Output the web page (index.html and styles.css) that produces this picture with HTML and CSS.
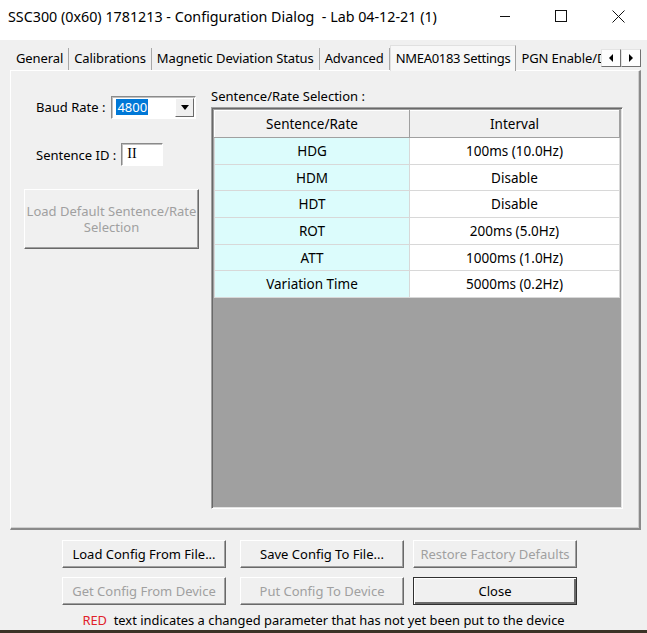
FILE: index.html
```html
<!DOCTYPE html>
<html>
<head>
<meta charset="utf-8">
<link rel="stylesheet" href="styles.css">
</head>
<body>
<div class="window">
  <div class="titlebar">
    <div class="title">SSC300 (0x60) 1781213 - Configuration Dialog&nbsp; - Lab 04-12-21 (1)</div>
    <div class="controls">
      <span class="ctl"><svg width="12" height="12" viewBox="0 0 12 12"><path d="M1 6.5h10" stroke="#111" stroke-width="1"/></svg></span>
      <span class="ctl"><svg width="12" height="12" viewBox="0 0 12 12"><rect x="0.5" y="0.5" width="11" height="11" fill="none" stroke="#111" stroke-width="1"/></svg></span>
      <span class="ctl"><svg width="13" height="13" viewBox="0 0 13 13"><path d="M0.5 0.5l12 12M12.5 0.5l-12 12" stroke="#111" stroke-width="1"/></svg></span>
    </div>
  </div>
  <div class="body">
    <div class="tabs">
      <div class="tab">General</div>
      <div class="tab">Calibrations</div>
      <div class="tab">Magnetic Deviation Status</div>
      <div class="tab">Advanced</div>
      <div class="tab active">NMEA0183 Settings</div>
      <div class="tab last">PGN Enable/Di</div>
      <div class="arrows">
        <span class="arr"><svg width="6" height="8" viewBox="0 0 6 8"><path d="M5 0v8L1 4z" fill="#000"/></svg></span>
        <span class="arr"><svg width="6" height="8" viewBox="0 0 6 8"><path d="M1 0v8l4-4z" fill="#000"/></svg></span>
      </div>
    </div>
    <div class="panel">
      <div class="left">
        <div class="field baud">
          <span class="lbl">Baud Rate :</span>
          <div class="combo"><span class="sel">4800</span><span class="drop"><svg width="8" height="5" viewBox="0 0 8 5"><path d="M0 0h8L4 5z" fill="#000"/></svg></span></div>
        </div>
        <div class="field sid">
          <span class="lbl">Sentence ID :</span>
          <div class="input">II</div>
        </div>
        <div class="btn disabled big">Load Default Sentence/Rate<br>Selection</div>
      </div>
      <div class="right">
        <div class="caption">Sentence/Rate Selection :</div>
        <div class="grid">
          <table>
            <tr class="hdr"><th class="c1">Sentence/Rate</th><th>Interval</th></tr>
            <tr><td class="c1">HDG</td><td>100ms (10.0Hz)</td></tr>
            <tr><td class="c1">HDM</td><td>Disable</td></tr>
            <tr><td class="c1">HDT</td><td>Disable</td></tr>
            <tr><td class="c1">ROT</td><td>200ms (5.0Hz)</td></tr>
            <tr><td class="c1">ATT</td><td>1000ms (1.0Hz)</td></tr>
            <tr><td class="c1">Variation Time</td><td>5000ms (0.2Hz)</td></tr>
          </table>
        </div>
      </div>
    </div>
    <div class="buttons">
      <div class="btn">Load Config From File...</div>
      <div class="btn">Save Config To File...</div>
      <div class="btn disabled col3">Restore Factory Defaults</div>
      <div class="btn disabled">Get Config From Device</div>
      <div class="btn disabled">Put Config To Device</div>
      <div class="btn default col3">Close</div>
    </div>
    <div class="note"><span class="red">RED</span>&nbsp; text indicates a changed parameter that has not yet been put to the device</div>
  </div>
  <div class="taskbar"></div>
</div>
</body>
</html>
```
FILE: styles.css
```css
* { box-sizing: border-box; }
html, body { margin: 0; padding: 0; }
body { width: 647px; height: 633px; overflow: hidden; font-family: "Noto Sans", "Open Sans", sans-serif; font-size: 13px; color: #000; }
.window { width: 647px; height: 633px; background: #f0f0f0; display: flex; flex-direction: column; }
.titlebar { height: 40px; background: #fff; display: flex; align-items: center; justify-content: space-between; padding-left: 8px; flex: none; }
.title { font-size: 14.3px; color: #000; margin-top: -8px; }
.controls { display: flex; height: 100%; margin-top: -8px; }
.ctl { width: 56px; display: flex; align-items: center; justify-content: center; }
.ctl:last-child { width: 58px; }
.body { flex: 1; display: flex; flex-direction: column; padding: 0 6px 0 10px; }
.tabs { display: flex; align-items: flex-end; height: 30px; padding-left: 1px; position: relative; }
.tab { height: 22px; line-height: 21px; padding: 0 5px; border-right: 1px solid #a8a8a8; font-size: 13px; letter-spacing: -0.1px; white-space: nowrap; background: #f0f0f0; }
.tab.active { height: 26px; line-height: 24px; background: #f7f7f7; border-left: 1px solid #e0e0e0; border-top: 1px solid #e0e0e0; border-right: 1px solid #a0a0a0; padding: 0 5px; margin-bottom: -1px; position: relative; z-index: 1; letter-spacing: -0.3px; }
.tab.last { flex: 1; min-width: 0; overflow: hidden; border-right: none; padding-right: 0; }
.arrows { display: flex; margin-bottom: 3px; flex: none; }
.arr { width: 20px; height: 18px; background: #fdfdfd; border: 1px solid #e4e4e4; border-right-color: #707070; border-bottom-color: #707070; display: flex; align-items: center; justify-content: center; }
.panel { height: 460px; border: 1px solid #fff; border-right: 2px solid #8a8a8a; border-bottom: 2px solid #8a8a8a; box-shadow: inset -1px -1px 0 #cfcfcf; display: flex; padding: 25px 0 0 13px; flex: none; }
.left { width: 187px; display: flex; flex-direction: column; }
.field { display: flex; align-items: center; }
.lbl { margin-left: 12px; }
.baud { height: 22px; }
.baud .lbl { margin-right: 6px; }
.combo { width: 85px; height: 23px; background: #fff; border: 1px solid; border-color: #8a8a8a #fff #fff #8a8a8a; display: flex; align-items: center; padding-left: 4px; box-shadow: inset 1px 1px 0 #c0c0c0; }
.sel { background: #0078d7; color: #fff; padding: 0 1px; line-height: 16px; }
.drop { margin-left: auto; width: 19px; height: 19px; border: 1px solid; border-color: #fff #6a6a6a #6a6a6a #fff; background: #f0f0f0; display: flex; align-items: center; justify-content: center; margin-right: 1px; }
.sid { margin-top: 25px; height: 23px; }
.sid .lbl { margin-right: 5px; }
.input { width: 42px; height: 23px; background: #fff; border: 1px solid; border-color: #8a8a8a #fff #fff #8a8a8a; box-shadow: inset 1px 1px 0 #c0c0c0; font-family: "Liberation Serif", serif; font-size: 14px; padding: 2px 0 0 5px; }
.btn { background: #f0f0f0; border: 1px solid; border-color: #fff #696969 #696969 #fff; box-shadow: inset -1px -1px 0 #a0a0a0; display: flex; align-items: center; justify-content: center; text-align: center; line-height: 16px; white-space: nowrap; }
.btn.disabled { color: #a0a0a0; }
.btn.big { margin-top: 23px; width: 175px; height: 60px; }
.right { flex: 1; display: flex; flex-direction: column; padding-left: 0; }
.caption { height: 16px; line-height: 14px; margin-top: -7px; }
.grid { width: 412px; height: 402px; margin-top: 2px; background: #a0a0a0; border: 1px solid; border-color: #a0a0a0 #fff #fff #a0a0a0; box-shadow: inset 1px 1px 0 #696969, inset -1px -1px 0 #e3e3e3; padding: 2px; }
table { border-collapse: collapse; width: 406px; table-layout: fixed; }
th, td { height: 26.7px; padding: 0; text-align: center; font-weight: normal; border: 1px solid #d8d8d8; font-size: 13.5px; }
th { background: #f0f0f0; border-color: #fff #a0a0a0 #a0a0a0 #fff; height: 27px; }
th.c1, td.c1 { width: 195px; }
td { background: #fff; }
td.c1 { background: #dcfcfc; }
.buttons { display: grid; grid-template-columns: 164px 164px 163px; column-gap: 14px; row-gap: 9px; margin: 10px 0 0 52px; }
.buttons .btn { height: 28px; }
.buttons .col3 { margin-left: -5px; width: 164px; }
.btn.default { border: 1px solid #303030; box-shadow: inset 1px 1px 0 #fff, inset -2px -2px 0 #6a6a6a; }
.note { text-align: center; margin-top: 7px; padding-right: 4px; height: 18px; line-height: 16px; font-size: 12.9px; }
.red { color: #e0202a; }
.taskbar { height: 4px; background: #3b3226; flex: none; }
```
